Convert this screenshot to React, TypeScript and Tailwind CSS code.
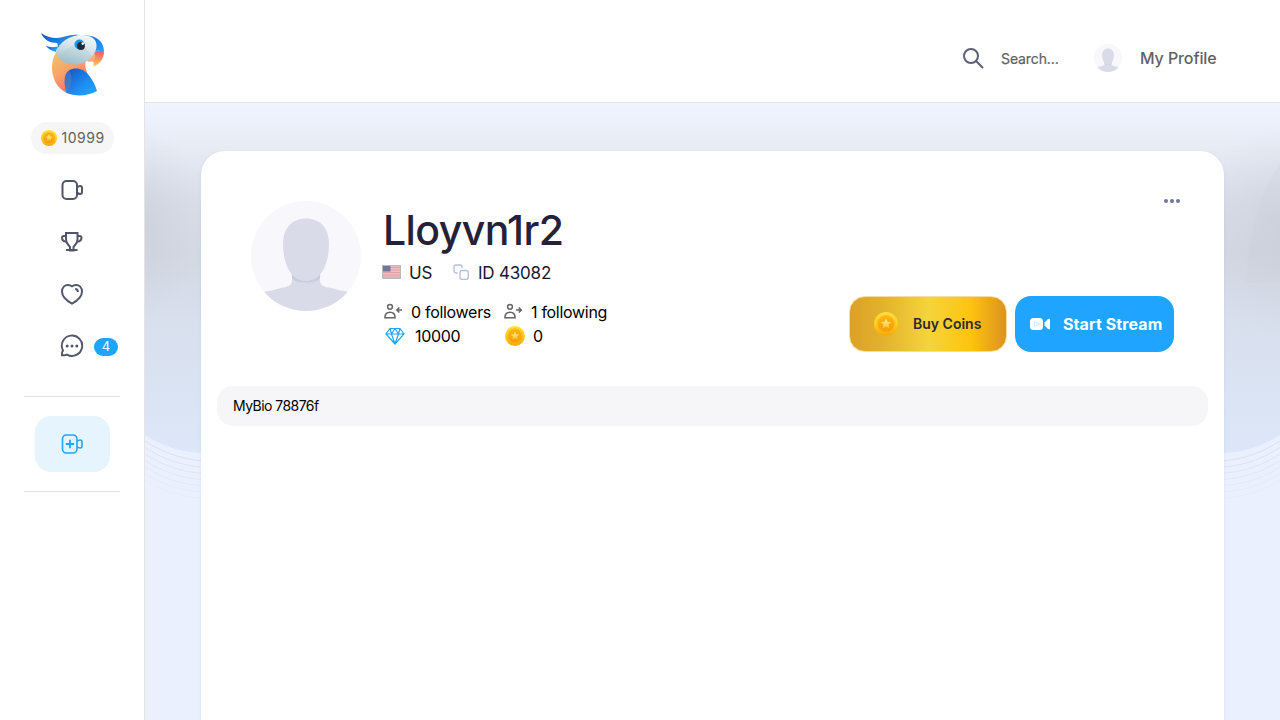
import React from "react";

type IconProps = { className?: string };

function Coin({ className }: IconProps) {
  return (
    <svg viewBox="0 0 24 24" className={className}>
      <defs>
        <linearGradient id="coinRim" x1="0" y1="0" x2="0" y2="1">
          <stop offset="0" stopColor="#ffdf3d" />
          <stop offset="0.5" stopColor="#ffce18" />
          <stop offset="1" stopColor="#f2a90a" />
        </linearGradient>
        <linearGradient id="coinFace" x1="0" y1="0" x2="0" y2="1">
          <stop offset="0" stopColor="#fcb50f" />
          <stop offset="1" stopColor="#f49d06" />
        </linearGradient>
        <linearGradient id="coinStar" x1="0" y1="0" x2="0" y2="1">
          <stop offset="0" stopColor="#ffec9a" />
          <stop offset="1" stopColor="#ffc22e" />
        </linearGradient>
      </defs>
      <circle cx="12" cy="12" r="12" fill="url(#coinRim)" />
      <circle cx="12" cy="12" r="8.9" fill="url(#coinFace)" />
      <circle cx="12" cy="12" r="8.4" fill="none" stroke="#ffc52b" strokeWidth="0.6" />
      <path d="m12 6.500 1.500 3.300 3.800.4-2.800 2.400.8 3.700-3.300-1.900-3.300 1.900.8-3.700-2.800-2.400 3.800-.4z" fill="url(#coinStar)" />
    </svg>
  );
}

function Parrot() {
  return (
    <svg viewBox="0 0 64 64" className="h-16 w-16">
      <defs>
        <linearGradient id="crest" x1="0" y1="0" x2="1" y2="0.6">
          <stop offset="0" stopColor="#164fc0" />
          <stop offset="1" stopColor="#20a8ff" />
        </linearGradient>
        <linearGradient id="nape" x1="0" y1="0" x2="1" y2="1">
          <stop offset="0" stopColor="#1a56c4" />
          <stop offset="1" stopColor="#20a8ff" />
        </linearGradient>
        <linearGradient id="body" x1="0.2" y1="0" x2="0.7" y2="0.9">
          <stop offset="0" stopColor="#eac36e" />
          <stop offset="0.45" stopColor="#f9a568" />
          <stop offset="1" stopColor="#f96a70" />
        </linearGradient>
        <linearGradient id="face" x1="0.7" y1="0" x2="0.3" y2="1">
          <stop offset="0" stopColor="#eff6f9" />
          <stop offset="0.5" stopColor="#cfe0e6" />
          <stop offset="1" stopColor="#9bbdc9" />
        </linearGradient>
        <linearGradient id="beak" x1="0.6" y1="0" x2="0.3" y2="1">
          <stop offset="0" stopColor="#fb5a72" />
          <stop offset="0.5" stopColor="#fa9a5c" />
          <stop offset="1" stopColor="#ffd047" />
        </linearGradient>
        <linearGradient id="wing" x1="0" y1="0" x2="1" y2="1">
          <stop offset="0" stopColor="#1750bd" />
          <stop offset="0.6" stopColor="#1d8ef4" />
          <stop offset="1" stopColor="#22a9ff" />
        </linearGradient>
      </defs>
      <path d="M1 1c7 5 15 6 22 4 5-1.300 10-3 16-2L17 17c1-3 1-5 0-6C10 11 4 8 1 1Z" fill="url(#crest)" />
      <path d="M5.500 13.200c4 2.300 8 2.300 12 1.300l-1.500 5.500c-4-1-8-3-10.500-6.800Z" fill="url(#crest)" />
      <path d="M16.500 20C11.500 26 11 38 13.500 45c2 7 6 12 13 16l24-14c-3-6-6-9-5-18L22 18Z" fill="url(#body)" />
      <path d="M43 3.500c12-1 21 5 21 16-5-1-8-1-12 1Z" fill="url(#nape)" />
      <path d="M45 26c2-5 8-7.500 19-6.800 0 7-4 13-11 15.300 1.500-2.500 1-4.500-1-5.500Z" fill="url(#beak)" />
      <circle cx="50" cy="24.500" r="5.300" fill="#f7ac7c" />
      <path d="M16 20C19 10 30 3 42 3c9 0 14 4 14.500 9.500.5 6-3 11-8 15.500-5 3.500-9 4.500-14 4.500-9 0-16-4.500-18.500-12.500Z" fill="url(#face)" />
      <path d="M20 26C23 18 31 13 39 14c5 1 10 4 12 10-4 6-10 8.500-17 8.500-6 0-11-2.500-14-6.500Z" fill="#9fc2cd" opacity=".25" />
      <path d="M26.500 61C23.500 50 24 42 29 38.500c7-4 15-1.500 20 5 4 5 6.500 10 8 15.500-9 5-21 6-30.500 2Z" fill="url(#wing)" />
      <path d="M26.500 61C23.500 50 24 42 29 38.500 33 45 32 54 26.500 61Z" fill="#5b83c6" opacity=".5" />
      <circle cx="39.500" cy="12.500" r="5" fill="#1795ea" />
      <circle cx="41" cy="14" r="3.900" fill="#202a38" />
      <circle cx="42.800" cy="11.600" r="1.300" fill="white" />
    </svg>
  );
}

function Avatar({ className, id }: IconProps & { id: string }) {
  return (
    <svg viewBox="0 0 110 110" className={className}>
      <clipPath id={id}><circle cx="55" cy="55" r="55" /></clipPath>
      <g clipPath={"url(#" + id + ")"}>
        <path d="M0 0h110v110H0z" fill="#f7f7fc" />
        <path d="M41 70v9c0 6-5 7-11 8-7 2-13 3-18 4l3 19h80l3-19c-5-1-11-2-18-4-6-1-11-2-11-8v-9Z" fill="#d9dce8" />
        <path d="M41 74c8 12 20 12 28 0v3c-8 8-20 8-28 0Z" fill="#c8cbdb" />
        <path d="M32 43c0-16 9-25.500 23-25.500s23 9.500 23 25.500c0 22-10 38-23 38S32 65 32 43Z" fill="#d9dce8" />
        <path d="M41 74.500c7 8.500 21 8.500 28 0" fill="none" stroke="#c8cbdb" strokeWidth="1.300" />
      </g>
    </svg>
  );
}

function Camera({ className, plus }: IconProps & { plus?: boolean }) {
  return (
    <svg viewBox="0 0 24 24" fill="none" stroke="currentColor" strokeWidth={plus ? 1.6 : 2} className={className}>
      <rect x="2.500" y="3" width="14.500" height="18" rx="4" />
      <path d="M17 9.500c1-1.200 2-1.500 3.200-1.500 1.200 0 1.800.9 1.800 2v4c0 1.100-.6 2-1.800 2-1.200 0-2.200-.3-3.200-1.500" />
      {plus && <path d="M5.800 12h8.400m-4.200-4.200v8.400" strokeWidth="1.800" />}
    </svg>
  );
}

function Trophy() {
  return (
    <svg viewBox="0 0 24 24" fill="none" stroke="currentColor" strokeWidth="2" className="h-6 w-6">
      <path d="M6 3h11.500v6.500c0 4-2.500 5-4 7.500v3.500h-3.500V17C8.500 14.500 6 13.500 6 9.500Z" />
      <path d="M6 6H4C2.500 6 2 6.500 2 7.500c0 2.500 2 4 4.500 4.300M17.500 6h2c1.500 0 2 .5 2 1.500 0 2.500-2 4-4.500 4.300M6 20h11.500" />
    </svg>
  );
}

function Heart() {
  return (
    <svg viewBox="0 0 24 24" fill="none" stroke="currentColor" strokeWidth="2" className="h-6 w-6">
      <path d="M12 4.300C10.500 3 9 2.900 8 2.900c-3.500 0-6 2.900-6 6.700 0 5.200 5.500 9.700 10 12.100 4.500-2.400 10-6.900 10-12.100 0-3.800-2.500-6.700-6-6.700-1 0-2.500.1-4 1.400Z" />
      <path d="M15.200 7c1.600 0 2.700 1.200 2.700 3" />
    </svg>
  );
}

function Chat() {
  return (
    <svg viewBox="0 0 24 24" fill="none" stroke="currentColor" strokeWidth="1.900" className="h-6 w-6">
      <path d="M2 21.300h2.500L7 20.600A10.200 10.200 0 1 0 3 16.500L2 18.500Z" />
      <g fill="currentColor" stroke="none"><circle cx="7.200" cy="12" r="1.500" /><circle cx="12" cy="12" r="1.500" /><circle cx="16.800" cy="12" r="1.500" /></g>
    </svg>
  );
}

function Follow({ out }: { out?: boolean }) {
  return (
    <svg viewBox="0 0 20 20" fill="none" stroke="#646464" strokeWidth="1.500" className="ml-px h-5 w-5">
      <circle cx="7" cy="4.800" r="2.400" />
      <path d="M1.900 15.800c0-3.800 1.600-5.600 5.100-5.600s5.100 1.800 5.100 5.600Z" />
      <path d={out ? "M13 8h5.200M15.800 5.500 18.300 8l-2.500 2.500" : "M19 8h-5.200M16.300 5.500 13.800 8l2.500 2.500"} />
    </svg>
  );
}

function Backdrop() {
  return (
    <svg viewBox="0 0 1135 617" className="absolute inset-0 h-full w-full">
      <defs>
        <linearGradient id="sky" x1="0" y1="0" x2="0" y2="1">
          <stop offset="0" stopColor="#f0f4ff" />
          <stop offset=".12" stopColor="#e7ecf5" />
          <stop offset=".28" stopColor="#d9dde7" />
          <stop offset=".43" stopColor="#d3d8e2" />
          <stop offset=".62" stopColor="#d8dfed" />
          <stop offset="1" stopColor="#dce7f9" />
        </linearGradient>
        <radialGradient id="shade">
          <stop offset="0" stopColor="#c7cad2" stopOpacity=".5" />
          <stop offset="1" stopColor="#cbd0db" stopOpacity="0" />
        </radialGradient>
      </defs>
      <path d="M0 0h1135v617H0z" fill="#ebf0fe" />
      <path d="M0 0h1135v332c-17 11-35 17-56 18H56C35 349 17 343 0 332Z" fill="url(#sky)" />
      <ellipse cx="0" cy="120" rx="55" ry="95" fill="url(#shade)" />
      <ellipse cx="1135" cy="130" rx="80" ry="110" fill="url(#shade)" />
      <path d="M1135 60c-20 30-31 70-34 120h34Z" fill="#c9cdd8" opacity=".18" />
      <g fill="none" stroke="#dce0ef">
        {[0, 1, 2, 3, 4, 5, 6].map((i) => (
          <path key={i} opacity={1 - i * 0.13} d={`M0 ${338 + i * 6.5}C17 ${349 + i * 6.5} 35 ${356 + i * 6.3} 58 ${358 + i * 6.2}H1077C1100 ${356 + i * 6.3} 1118 ${349 + i * 6.5} 1135 ${338 + i * 6.5}`} />
        ))}
      </g>
    </svg>
  );
}

function Sidebar() {
  return (
    <aside className="flex h-full w-[145px] shrink-0 flex-col items-center border-r border-[#e4e4e7] bg-white pt-8 text-[#515669]">
      <Parrot />
      <div className="mt-[26px] flex h-8 w-[83px] items-center rounded-full bg-[#f6f6f7] pl-2.5 text-sm tracking-[0.5px] text-[#616161]">
        <Coin className="mr-[5px] h-4 w-4" />10999
      </div>
      <nav className="mt-6 flex w-full flex-col gap-7 pl-[60px]">
        <Camera className="h-6 w-6" />
        <Trophy />
        <Heart />
        <div className="flex items-center">
          <Chat />
          <span className="ml-2.5 mt-0.5 flex h-[18px] w-6 items-center justify-center rounded-full bg-[#1fa5ff] text-[13px] text-white">4</span>
        </div>
      </nav>
      <div className="mt-[38px] flex h-24 w-24 items-center justify-center border-y border-[#e2e2e4]">
        <button className="flex h-14 w-[75px] shrink-0 items-center justify-center rounded-2xl bg-[#e5f4fd] text-[#1fa5ff]">
          <Camera plus className="h-6 w-6" />
        </button>
      </div>
    </aside>
  );
}

function Profile() {
  return (
    <section className="relative ml-14 mt-12 h-[620px] w-[1023px] rounded-t-3xl bg-white px-4 pt-[50px] shadow-[0_2px_4px_rgba(100,130,180,0.12)]">
      <div className="flex h-[185px] pl-[34px] pr-[34px]">
        <Avatar id="large-avatar" className="h-[110px] w-[110px] shrink-0" />
        <div className="ml-[21px] w-[440px] whitespace-nowrap">
          <h1 className="ml-px mt-1 h-[50px] text-[41px] font-medium leading-[50px] tracking-[-0.6px] text-[#252138]">Lloyvn1r2</h1>
          <div className="mt-[5px] flex h-6 items-center text-[17px] tracking-[-0.2px] text-[#17172d]">
            <svg viewBox="0 0 19 14" className="h-[14px] w-[19px]">
              <path d="M0 0h19v14H0z" fill="#e9c0c4" />
              <path d="M0 2.500h19M0 5h19M0 7.500h19M0 10h19M0 12h19" stroke="#dfa0a7" />
              <path d="M0 0h8.500v6.500H0z" fill="#70779d" />
              <path d="M.5.5h18v13H.5z" fill="none" stroke="#b9b9bd" />
            </svg>
            <span className="ml-2 w-[44px] pt-[3px]">US</span>
            <svg viewBox="0 0 16 16" fill="none" stroke="#b3bdd9" strokeWidth="1.300" className="h-4 w-4">
              <rect x="7" y="6.500" width="8.300" height="8.800" rx="2" />
              <path d="M4.500 9H3a2 2 0 0 1-2-2V3a2 2 0 0 1 2-2h4a2 2 0 0 1 2 2v1" />
            </svg>
            <span className="ml-[9px] pt-[3px]">ID 43082</span>
          </div>
          <div className="mt-4 grid grid-cols-[120px_150px] text-base leading-6 tracking-[-0.3px] text-black">
            <div className="flex items-center"><Follow /><span className="ml-2">0 followers</span></div>
            <div className="flex items-center"><Follow out /><span className="ml-2">1 following</span></div>
            <div className="flex items-center">
              <svg viewBox="0 0 20 18" fill="none" stroke="#1fa5ff" strokeWidth="1.200" className="ml-[3px] h-[18px] w-5">
                <path d="M5 1.500h10l4 5.500-9 10L1 7Zm-4 5.500h18M5 1.500 6.500 7 10 17l3.500-10L15 1.500M6.500 7 10 1.500 13.500 7" />
              </svg>
              <span className="ml-[10px]">10000</span>
            </div>
            <div className="flex items-center"><Coin className="ml-[3px] h-5 w-5" /><span className="ml-2">0</span></div>
          </div>
        </div>
        <div className="ml-auto mt-[95px] flex h-14 shrink-0 gap-2">
          <button className="flex w-[158px] items-center rounded-2xl border border-[#f5dda0] bg-[linear-gradient(90deg,#dba027_0%,#e4b52d_24%,#f4d43c_50%,#ffc40e_77%,#dc921e_100%)] pl-6 text-sm font-semibold text-[#2c2831]">
            <Coin className="mr-[15px] h-6 w-6" /><span>Buy Coins</span>
          </button>
          <button className="flex w-[159px] items-center whitespace-nowrap rounded-2xl bg-[#1fa5ff] pl-[15px] text-base font-bold tracking-[0.1px] text-white">
            <svg viewBox="0 0 21 12" className="mr-3 h-3 w-[21px]" fill="white">
              <rect width="13" height="12" rx="3.500" /><path d="M14.500 4.500 18 1q2-1 2 1v8q0 2-2 1l-3.500-3.500Z" /><path d="m4.500 3.500 5 2.500-5 2.500Z" fill="none" stroke="#bce3fc" strokeWidth=".7" />
            </svg>Start Stream
          </button>
        </div>
      </div>
      <button className="absolute right-11 top-12 flex gap-0.5 text-[#70749a]">
        <span className="h-1 w-1 rounded-full bg-current" /><span className="h-1 w-1 rounded-full bg-current" /><span className="h-1 w-1 rounded-full bg-current" />
      </button>
      <div className="flex h-10 items-center rounded-2xl bg-[#f6f6f9] px-4 text-sm tracking-[-0.55px] text-black">MyBio 78876f</div>
    </section>
  );
}

export default function App() {
  return (
    <div className="flex h-screen overflow-hidden bg-white font-['Inter',sans-serif]">
      <Sidebar />
      <div className="flex min-w-0 flex-1 flex-col">
        <header className="flex h-[103px] shrink-0 items-center border-b border-[#e2e3e8] pl-[816px] pt-[14px] text-[#616161]">
          <svg viewBox="0 0 24 24" fill="none" stroke="#5b6076" strokeWidth="2" className="h-6 w-6"><circle cx="10" cy="10" r="7" /><path d="m15 15 7 7" /></svg>
          <span className="ml-4 w-[93px] pt-0.5 text-sm tracking-[-0.1px] [-webkit-text-stroke:0.2px]">Search...</span>
          <Avatar id="small-avatar" className="h-7 w-7" />
          <span className="ml-[18px] whitespace-nowrap text-base font-medium tracking-[-0.1px]">My Profile</span>
        </header>
        <main className="relative min-h-0 flex-1 overflow-hidden"><Backdrop /><Profile /></main>
      </div>
    </div>
  );
}
